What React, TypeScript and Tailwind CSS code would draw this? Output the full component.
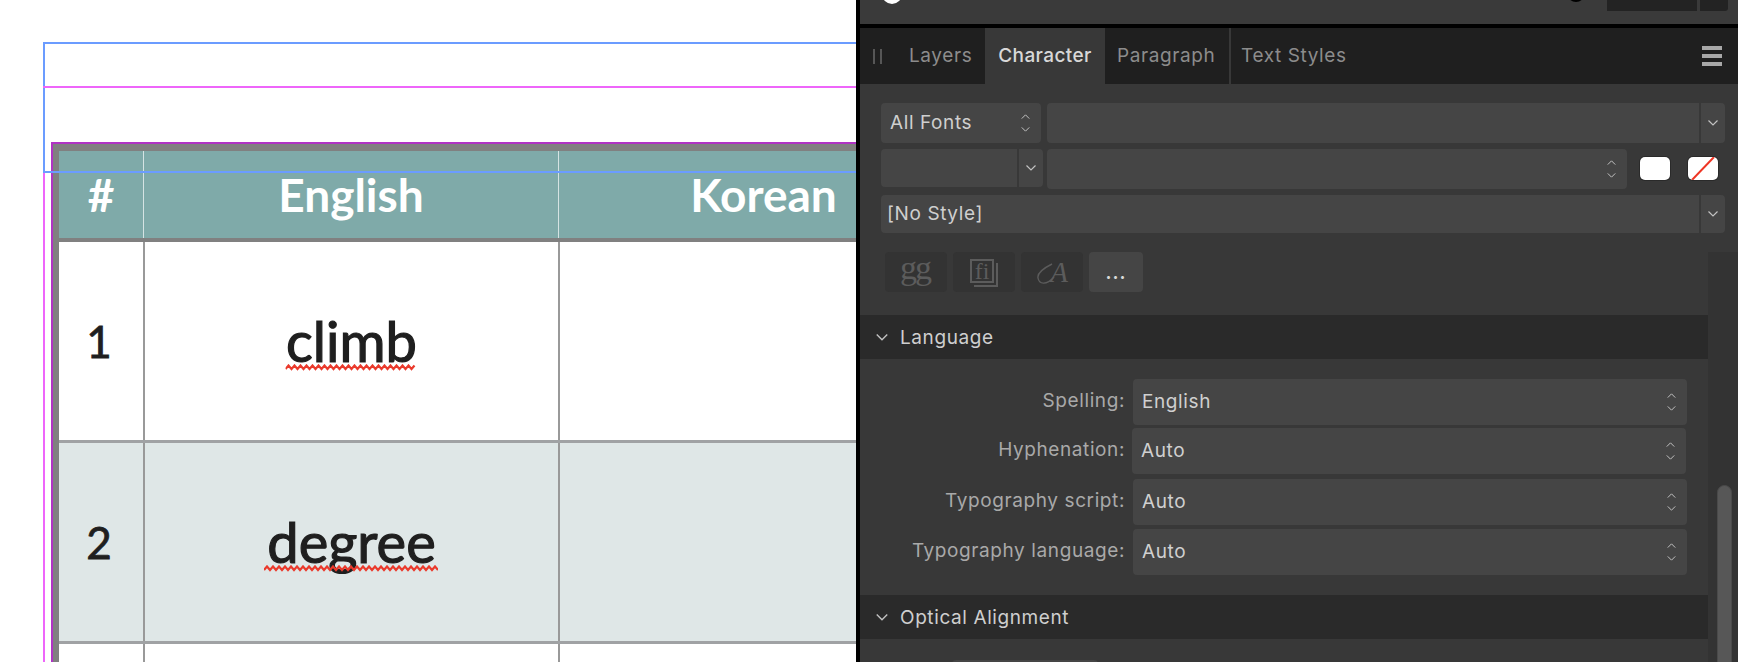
const Chevron = ({ up, className }: { up?: boolean; className?: string }) => (
  <svg viewBox="0 0 10 6" fill="none" className={className}>
    <polyline points={up ? "0.5,5.5 5,1 9.5,5.5" : "0.5,0.5 5,5 9.5,0.5"} stroke="#c2c2c2" strokeWidth="1.2" />
  </svg>
);

const Stepper = () => (
  <div className="flex flex-col gap-[8px]">
    <Chevron up className="w-[9px] h-[5px]" />
    <Chevron className="w-[9px] h-[5px]" />
  </div>
);

const Squiggle = ({ width }: { width: number }) => {
  const pts: string[] = [];
  for (let x = 0, i = 0; x <= width; x += 3, i++) pts.push(`${x},${i % 2 ? 1.5 : 5}`);
  return (
    <svg width={width} height={7} className="absolute left-1/2 -translate-x-1/2 top-full -mt-[3px]">
      <polyline points={pts.join(" ")} fill="none" stroke="#ea3a2c" strokeWidth="2.2" />
    </svg>
  );
};

const TableRow = ({ num, word, width, bg }: { num?: string; word?: string; width?: number; bg: string }) => (
  <div className={`grid grid-cols-[84px_415px_410px] h-[198px] ${bg}`}>
    <div className="flex items-center justify-center text-[44px] [-webkit-text-stroke:0.8px_#1f1f1f] text-[#1f1f1f] pr-[4px]">{num}</div>
    <div className="flex items-center justify-center border-l-2 border-[#999999] text-[56px] [-webkit-text-stroke:1.2px_#1f1f1f] text-[#1f1f1f]">
      {word && (
        <span className="relative leading-[52px]">
          {word}
          <Squiggle width={width ?? 0} />
        </span>
      )}
    </div>
    <div className="border-l-2 border-[#999999]" />
  </div>
);

const Canvas = () => (
  <div className="relative w-[856px] h-full overflow-hidden bg-white pt-[142px] pl-[51px] font-['Lato',sans-serif]">
    <div className="w-[917px] border-t-2 border-l-2 border-[#b033c4] bg-[#808080] pt-[7px] pl-[6px]">
      <div className="grid grid-cols-[84px_415px_410px] h-[87px] bg-[#7faaa9] text-white font-bold">
        <div className="flex items-center justify-center text-[46px]">#</div>
        <div className="flex items-center justify-center border-l border-[#d5e3e3] text-[46px]">English</div>
        <div className="flex items-center justify-center border-l border-[#d5e3e3] text-[46px]">Korean</div>
      </div>
      <div className="h-[4px] bg-[#808080]" />
      <TableRow num="1" word="climb" width={131} bg="bg-white" />
      <div className="h-[3px] bg-[#a0a2a4]" />
      <TableRow num="2" word="degree" width={174} bg="bg-[#dfe7e7]" />
      <div className="h-[3px] bg-[#a0a2a4]" />
      <TableRow bg="bg-white" />
    </div>
    {/* guides sit on top of the page */}
    <div className="absolute left-[43px] top-[42px] w-[830px] h-[131px] border-2 border-[#6b9cff]" />
    <div className="absolute left-[43px] top-[86px] right-0 h-[2px] bg-[#ee66fa]" />
    <div className="absolute left-[43px] top-[173px] bottom-0 w-[2px] bg-[#ee66fa]" />
  </div>
);

const FieldRow = ({ label, value, className }: { label: string; value: string; className: string }) => (
  <div className={`flex items-center ${className}`}>
    <div className="w-[265px] text-right text-[#a9a9a9] pb-[1px]">{label}</div>
    <div className="flex-1 h-[46px] ml-[8px] flex items-center justify-between bg-[#454545] rounded-[4px] pl-[9px] pr-[11px] text-[#d0d0d0]">
      <span className="pt-[1px]">{value}</span>
      <Stepper />
    </div>
  </div>
);

const SectionHeader = ({ title, className }: { title: string; className?: string }) => (
  <div className={`h-[44px] bg-[#2a2a2a] flex items-center pl-[16px] gap-[12px] text-[#cfcfcf] ${className ?? ""}`}>
    <Chevron className="w-[12px] h-[7px]" />
    <span className="pt-[2px]">{title}</span>
  </div>
);

const IconButton = ({ children }: { children: React.ReactNode }) => (
  <div className="w-[62px] h-[40px] rounded-[4px] bg-[#333333] flex items-center justify-center text-[#5c5c5c]">{children}</div>
);

const Panel = () => (
  <div className="flex-1 h-full border-l-4 border-black bg-[#383838] flex flex-col font-['Inter',sans-serif] text-[19px] tracking-[0.6px] overflow-hidden">
    <div className="h-[24px] shrink-0 bg-[#3a3a3a] flex items-start overflow-hidden">
      <div className="ml-[22px] -mt-[16px] w-[20px] h-[20px] rounded-full bg-white" />
      <div className="ml-[665px] -mt-[16px] w-[18px] h-[18px] rounded-full bg-white border-[3px] border-black" />
      <div className="ml-[22px] w-[90px] h-[11px] bg-[#232323]" />
      <div className="ml-[3px] w-[28px] h-[11px] bg-[#232323] rounded-br-[3px]" />
    </div>
    <div className="h-[4px] shrink-0 bg-black" />

    <div className="h-[56px] shrink-0 bg-[#1f1f1f] flex items-stretch text-[#8c8c8c]">
      <div className="flex items-center gap-[5px] pl-[13px] pr-[27px]">
        <div className="w-[2px] h-[15px] bg-[#565656]" />
        <div className="w-[2px] h-[15px] bg-[#565656]" />
      </div>
      <div className="flex items-center w-[76px]">Layers</div>
      <div className="flex items-center w-[120px] justify-center bg-[#383838] text-[#d8d8d8] font-medium tracking-[0.4px]">Character</div>
      <div className="flex items-center w-[126px] pl-[12px] border-r-2 border-[#383838]">Paragraph</div>
      <div className="flex items-center pl-[10px]">Text Styles</div>
      <div className="ml-auto mr-[16px] self-center flex flex-col gap-[4px]">
        <div className="w-[20px] h-[4px] bg-[#a8a8a8]" />
        <div className="w-[20px] h-[4px] bg-[#a8a8a8]" />
        <div className="w-[20px] h-[4px] bg-[#a8a8a8]" />
      </div>
    </div>

    <div className="h-[168px] shrink-0 pt-[19px] pl-[21px] flex flex-col gap-[6px]">
      <div className="flex h-[40px]">
        <div className="w-[160px] bg-[#454545] rounded-[4px] flex items-center justify-between pl-[9px] pr-[11px] text-[#cfcfcf]">
          <span className="pt-[1px]">All Fonts</span>
          <Stepper />
        </div>
        <div className="ml-[6px] w-[652px] bg-[#454545] rounded-l-[4px]" />
        <div className="ml-[2px] w-[24px] bg-[#454545] rounded-r-[4px] flex items-center justify-center">
          <Chevron className="w-[10px] h-[6px]" />
        </div>
      </div>
      <div className="flex h-[40px] items-start">
        <div className="w-[136px] h-[38px] bg-[#454545] rounded-l-[4px]" />
        <div className="ml-[2px] w-[24px] h-[38px] bg-[#454545] rounded-r-[4px] flex items-center justify-center">
          <Chevron className="w-[10px] h-[6px]" />
        </div>
        <div className="ml-[4px] w-[580px] h-[40px] bg-[#454545] rounded-[4px] flex items-center justify-end pr-[11px]">
          <Stepper />
        </div>
        <div className="ml-[13px] mt-[8px] w-[30px] h-[23px] rounded-[5px] bg-white shadow-[0_0_0_1px_#2a2a2a]" />
        <div className="ml-[18px] mt-[8px] w-[30px] h-[23px] rounded-[5px] bg-white shadow-[0_0_0_1px_#2a2a2a] overflow-hidden">
          <svg viewBox="0 0 30 23" className="w-full h-full">
            <line x1="4" y1="23" x2="26" y2="0" stroke="#ee3524" strokeWidth="2" />
          </svg>
        </div>
      </div>
      <div className="flex h-[38px]">
        <div className="w-[818px] bg-[#454545] rounded-l-[4px] flex items-center pl-[6px] text-[#cfcfcf]">[No Style]</div>
        <div className="ml-[2px] w-[24px] bg-[#454545] rounded-r-[4px] flex items-center justify-center">
          <Chevron className="w-[10px] h-[6px]" />
        </div>
      </div>
    </div>

    <div className="flex flex-1 min-h-0">
      <div className="w-[848px] shrink-0 flex flex-col">
        <div className="flex gap-[6px] h-[40px] pl-[25px] shrink-0">
          <IconButton>
            <span className="font-['Liberation_Serif',serif] text-[34px] leading-none pb-[8px] tracking-[-2px] pr-[2px]">gg</span>
          </IconButton>
          <IconButton>
            <div className="relative w-[24px] h-[24px] border-2 border-[#5c5c5c] flex items-center justify-center -translate-x-[2px] -translate-y-[1px]">
              <span className="font-['Liberation_Serif',serif] text-[24px] tracking-normal leading-none">fi</span>
              <div className="absolute -right-[6px] -bottom-[6px] w-[24px] h-[24px] border-r-2 border-b-2 border-[#5c5c5c]" />
            </div>
          </IconButton>
          <IconButton>
            <div className="relative w-[32px] h-[28px] flex items-center justify-end">
              <svg viewBox="0 0 32 28" fill="none" className="absolute inset-0 w-full h-full">
                <path d="M16 6C6 11 1 15 2 20C3 26 10 28 18 19" stroke="#5c5c5c" strokeWidth="1.4" />
              </svg>
              <span className="font-['Liberation_Serif',serif] italic text-[29px] tracking-normal leading-none">A</span>
            </div>
          </IconButton>
          <div className="w-[54px] h-[40px] rounded-[4px] bg-[#454545] flex items-center justify-center text-[#d8d8d8] text-[18px] font-bold tracking-[1px]">...</div>
        </div>
        <SectionHeader title="Language" className="mt-[23px] shrink-0" />
        <div className="flex flex-col pt-[20px] shrink-0">
          <FieldRow label="Spelling:" value="English" className="pr-[21px]" />
          <FieldRow label="Hyphenation:" value="Auto" className="mt-[3px] pr-[22px] [&>div:last-child]:ml-[7px]" />
          <FieldRow label="Typography script:" value="Auto" className="mt-[5px] pr-[21px]" />
          <FieldRow label="Typography language:" value="Auto" className="mt-[4px] pr-[21px]" />
        </div>
        <SectionHeader title="Optical Alignment" className="mt-[20px] shrink-0" />
        <div className="mt-[21px] ml-[92px] w-[146px] h-[30px] shrink-0 bg-[#454545] rounded-[4px]" />
      </div>
      <div className="flex-1 bg-[#333333] pt-[233px] pl-[9px]">
        <div className="w-[15px] h-[400px] rounded-full bg-[#575757] border border-[#4a4a4a]" />
      </div>
    </div>
  </div>
);

export default function App() {
  return (
    <div className="flex w-[1738px] h-[662px] overflow-hidden">
      <Canvas />
      <Panel />
    </div>
  );
}
